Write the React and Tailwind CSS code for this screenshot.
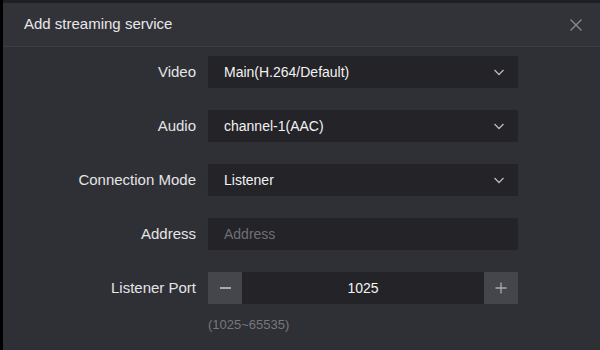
import React from 'react';

const font = { fontFamily: '"Liberation Sans", Arial, sans-serif' };

function Chevron() {
  return (
    <svg width="12" height="12" viewBox="0 0 12 12" className="text-[#b8b9bd]">
      <path d="M1.5 4 L6 8.5 L10.5 4" fill="none" stroke="currentColor" strokeWidth="1.3" />
    </svg>
  );
}

function SelectBox({ value }) {
  return (
    <div className="w-[310px] h-8 bg-[#232328] flex items-center justify-between pl-4 pr-[13px]">
      <span className="text-[14px] text-[#f2f2f2]">{value}</span>
      <Chevron />
    </div>
  );
}

function Row({ label, children }) {
  return (
    <div className="flex items-center mb-[22px]">
      <div className="w-[205px] pr-3 text-right text-[15px] text-[#e4e4e6]">{label}</div>
      {children}
    </div>
  );
}

export default function App() {
  return (
    <div className="w-[600px] h-[350px] bg-[#2f3035] border-l-[3px] border-black flex flex-col overflow-hidden" style={font}>
      {/* top strip behind the modal */}
      <div className="h-[3px] bg-[#1f2024]" />

      {/* header */}
      <div className="h-[44px] bg-[#323338] border-b border-[#3d3e43] flex items-center justify-between pl-[21px] pr-[17px]">
        <span className="text-[15px] text-[#e8e8ea]">Add streaming service</span>
        <svg width="14" height="14" viewBox="0 0 14 14" className="text-[#8a8b90]">
          <path d="M1.5 1.5 L12.5 12.5 M12.5 1.5 L1.5 12.5" stroke="currentColor" strokeWidth="1.3" />
        </svg>
      </div>

      {/* body */}
      <div className="pt-[9px]">
        <Row label="Video">
          <SelectBox value="Main(H.264/Default)" />
        </Row>
        <Row label="Audio">
          <SelectBox value="channel-1(AAC)" />
        </Row>
        <Row label="Connection Mode">
          <SelectBox value="Listener" />
        </Row>
        <Row label="Address">
          <div className="w-[310px] h-8 bg-[#232328] flex items-center pl-4">
            <span className="text-[14px] text-[#6f7075]">Address</span>
          </div>
        </Row>
        <div className="flex items-center">
          <div className="w-[205px] pr-3 text-right text-[15px] text-[#e4e4e6]">Listener Port</div>
          <div className="w-[310px] h-8 bg-[#232328] flex items-stretch">
            <button className="w-[34px] bg-[#45464c] flex items-center justify-center">
              <span className="block w-[11px] h-[1.5px] bg-[#a9aaae]" />
            </button>
            <div className="flex-1 flex items-center justify-center text-[14px] text-[#f5f5f5]">1025</div>
            <button className="w-[34px] bg-[#45464c] flex items-center justify-center text-[#a9aaae]">
              <svg width="12" height="12" viewBox="0 0 12 12">
                <path d="M6 0.5 V11.5 M0.5 6 H11.5" stroke="currentColor" strokeWidth="1.3" />
              </svg>
            </button>
          </div>
        </div>
        <div className="pl-[205px] pt-[11px] text-[13px] text-[#76777c]">(1025~65535)</div>
      </div>
    </div>
  );
}
